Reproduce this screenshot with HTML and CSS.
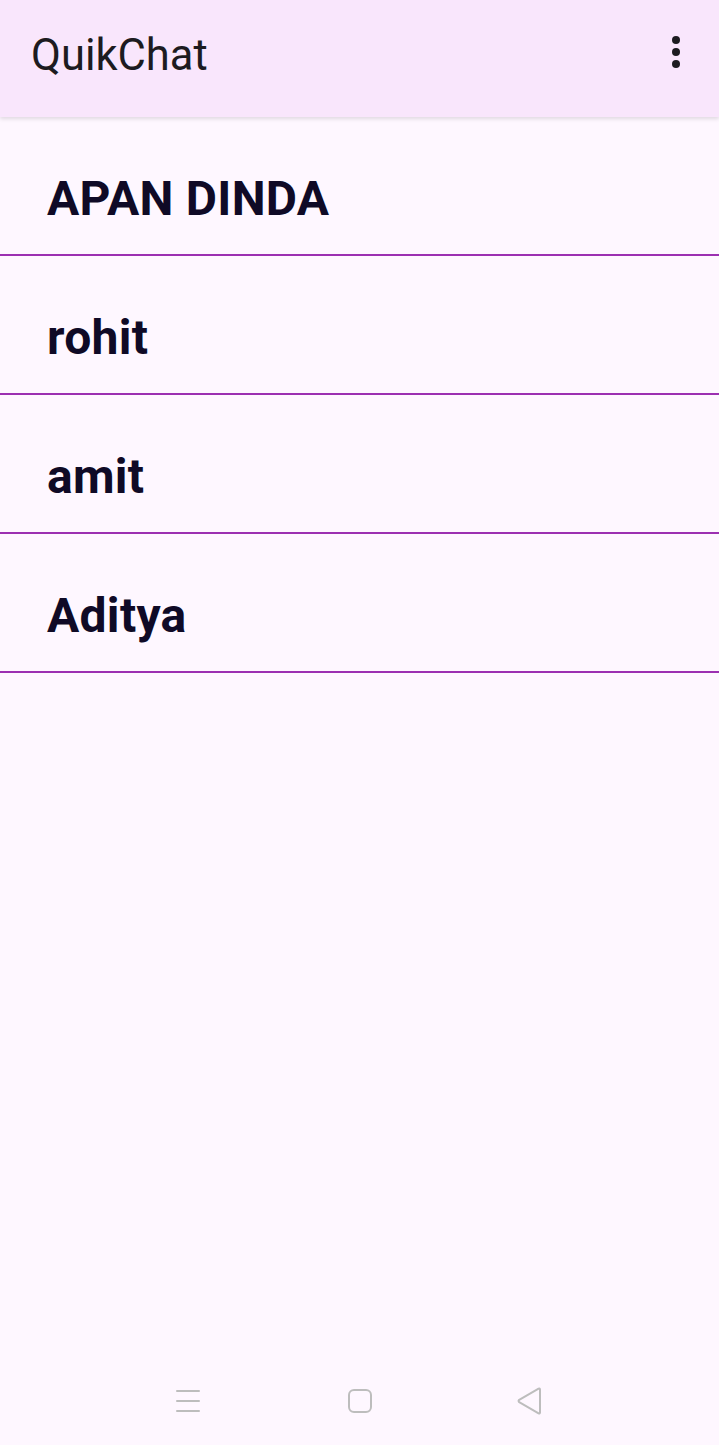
FILE: index.html
```html
<!DOCTYPE html>
<html lang="en">
<head>
<meta charset="utf-8">
<title>QuikChat</title>
<link rel="stylesheet" href="styles.css">
</head>
<body>
<div class="app">
  <header class="topbar">
    <h1 class="title">QuikChat</h1>
    <button class="menu" aria-label="More options">
      <svg width="12" height="36" viewBox="0 0 12 36"><circle cx="6" cy="6" r="4" fill="#1d1b20"/><circle cx="6" cy="18" r="4" fill="#1d1b20"/><circle cx="6" cy="30" r="4" fill="#1d1b20"/></svg>
    </button>
  </header>
  <ul class="list">
    <li class="item">APAN DINDA</li>
    <li class="item">rohit</li>
    <li class="item">amit</li>
    <li class="item">Aditya</li>
  </ul>
  <div class="spacer"></div>
  <nav class="navbar">
    <svg class="nav-icon" width="28" height="28" viewBox="0 0 28 28"><g stroke="#bdbdbd" stroke-width="2" stroke-linecap="round"><line x1="3" y1="4" x2="25" y2="4"/><line x1="3" y1="14" x2="25" y2="14"/><line x1="3" y1="24" x2="25" y2="24"/></g></svg>
    <svg class="nav-icon nav-home" width="28" height="28" viewBox="0 0 28 28"><rect x="3" y="3" width="22" height="22" rx="5" fill="none" stroke="#bdbdbd" stroke-width="2"/></svg>
    <svg class="nav-icon nav-back" width="28" height="28" viewBox="0 0 28 28"><path d="M25 2.5 L25 25.5 Q25 27 23.6 26.3 L4.2 15.2 Q3 14 4.2 12.8 L23.6 1.7 Q25 1 25 2.5 Z" fill="none" stroke="#bdbdbd" stroke-width="2" stroke-linejoin="round"/></svg>
  </nav>
</div>
</body>
</html>
```

FILE: styles.css
```css
html, body {
  margin: 0;
  padding: 0;
  background: #fef7ff;
}
body {
  font-family: Roboto, "Liberation Sans", sans-serif;
}
.app {
  display: flex;
  flex-direction: column;
  height: 1445px;
  width: 719px;
  overflow: hidden;
}
.topbar {
  height: 117px;
  flex: 0 0 117px;
  background: #f9e6fc;
  display: flex;
  align-items: center;
  justify-content: space-between;
  padding: 0 37px 0 31px;
  box-sizing: border-box;
  box-shadow: 0 2px 4px rgba(0,0,0,0.12);
  position: relative;
  z-index: 1;
}
.title {
  margin: 0 0 6px 0;
  font-weight: 400;
  font-size: 43.5px;
  color: #1d1b20;
  line-height: 1;
}
.menu {
  border: 0;
  background: none;
  padding: 0;
  display: flex;
  margin-bottom: 13px;
}
.list {
  list-style: none;
  margin: 0;
  padding: 0;
}
.item {
  height: 139px;
  box-sizing: border-box;
  border-bottom: 2px solid #9c2fb1;
  padding: 55px 0 0 47px;
  font-size: 48px;
  line-height: 54px;
  font-weight: 700;
  letter-spacing: 0.3px;
  color: #0f0a26;
}
.spacer {
  flex: 1;
}
.navbar {
  flex: 0 0 88px;
  display: flex;
  align-items: center;
  padding: 0 0 0 174px;
  box-sizing: border-box;
}
.nav-home {
  margin-left: 144px;
}
.nav-back {
  margin-left: 141px;
}
```
